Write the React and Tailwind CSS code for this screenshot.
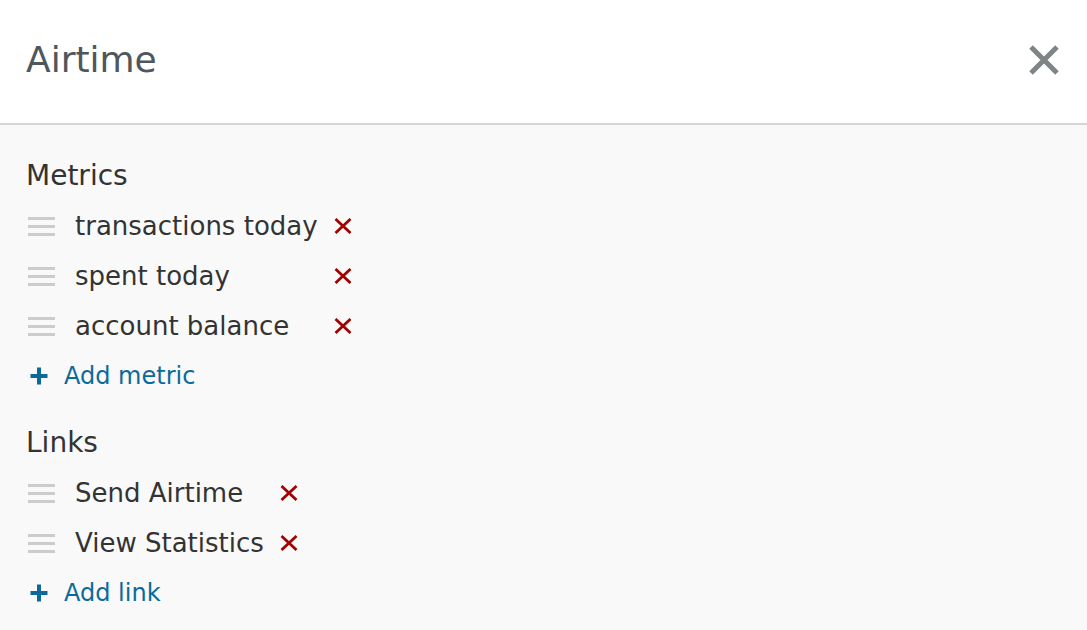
import React from "react";

const font = { fontFamily: '"DejaVu Sans", Verdana, sans-serif' };

function Handle() {
  return (
    <div className="flex flex-col gap-[5px] w-[27px]">
      <div className="h-[3px] bg-[#cccccc]" />
      <div className="h-[3px] bg-[#cccccc]" />
      <div className="h-[3px] bg-[#cccccc]" />
    </div>
  );
}

function RemoveX() {
  return (
    <svg width="18" height="16" viewBox="0 0 18 16" className="block">
      <path d="M1.5 1 L16.5 15 M16.5 1 L1.5 15" stroke="#a30000" strokeWidth="2.8" strokeLinecap="butt" fill="none" />
    </svg>
  );
}

function Plus() {
  return (
    <svg width="18" height="18" viewBox="0 0 18 18" className="block">
      <path d="M9 0.5 V17.5 M0.5 9 H17.5" stroke="#0b6a9a" strokeWidth="4" fill="none" />
    </svg>
  );
}

function Section({ title, items, addLabel, className }) {
  return (
    <div className={className}>
      <div className="h-[50px] flex items-center text-[28px] text-[#333333]">{title}</div>
      <div className="grid grid-cols-[auto_auto_auto] justify-start items-center">
        {items.map((it) => (
          <React.Fragment key={it}>
            <div className="h-[50px] flex items-center pl-[2px] pr-[20px]">
              <Handle />
            </div>
            <div className="h-[50px] flex items-center text-[26px] text-[#333333] pr-[16px]">{it}</div>
            <div className="h-[50px] flex items-center">
              <RemoveX />
            </div>
          </React.Fragment>
        ))}
      </div>
      <div className="h-[50px] flex items-center gap-[16px] pl-[4px] text-[24px] text-[#0b6a9a]">
        <Plus />
        <span>{addLabel}</span>
      </div>
    </div>
  );
}

export default function App() {
  return (
    <div className="w-[1087px] h-[630px] bg-[#f9f9f9] overflow-hidden" style={font}>
      <div className="h-[125px] bg-white border-b-2 border-[#d4d4d4] flex items-center justify-between pl-[26px] pr-[28px] pb-[4px]">
        <div className="text-[36px] text-[#4f575c]">Airtime</div>
        <svg width="30" height="30" viewBox="0 0 30 30" className="block">
          <path d="M2 2 L28 28 M28 2 L2 28" stroke="#7f8487" strokeWidth="5" fill="none" />
        </svg>
      </div>
      <div className="pl-[26px] pt-[26px]">
        <Section title="Metrics" items={["transactions today", "spent today", "account balance"]} addLabel="Add metric" />
        <Section className="mt-[17px]" title="Links" items={["Send Airtime", "View Statistics"]} addLabel="Add link" />
      </div>
    </div>
  );
}
